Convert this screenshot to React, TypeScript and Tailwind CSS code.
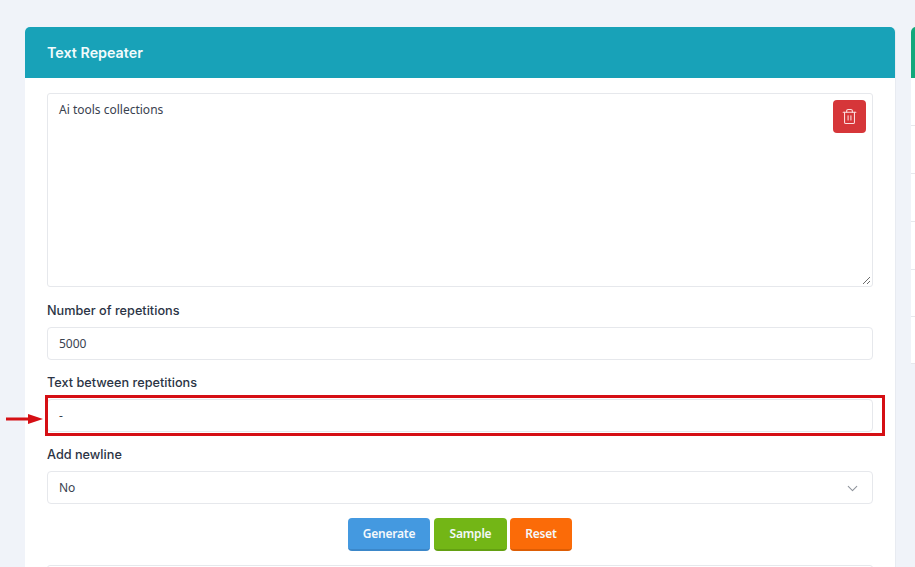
import { ChevronDown, Trash2 } from "lucide-react";

const sideRows = ["h-[48px]", "h-[48px]", "h-[48px]", "h-[48px]", "h-[47px]", "h-[47px]"];

function Label({ children }: { children: string }) {
  return <div className="mb-[9px] h-[15px] pt-[1px] text-[12.7px] leading-[14px] font-[450] text-[#2b3445]">{children}</div>;
}

function Field({ value }: { value: string }) {
  return (
    <div className="flex h-[33px] items-center rounded-[4px] border border-[#e6e8ec] bg-white px-[11px] font-['Noto_Sans',sans-serif] text-[12px] text-[#3a4250]">
      {value}
    </div>
  );
}

export default function App() {
  return (
    <div className="relative h-[567px] w-[915px] overflow-hidden bg-[#f0f3f9] font-['Inter',sans-serif]">
      <div className="flex gap-[15px] pt-[27px] pl-[25px]">
        {/* Main card */}
        <div className="h-[560px] w-[871px] shrink-0 rounded-t-[5px] border-r border-[#e8ebf1] bg-white">
          <div className="flex h-[51px] items-center rounded-t-[5px] bg-[#18a2b8] px-[22px] text-[14.3px] font-semibold text-[#f2fbfc]">
            Text Repeater
          </div>
          <div className="px-[22px] pt-[15px]">
            <div className="relative mb-[16px] h-[194px] rounded-[3px] border border-[#e6e8ec] px-[11px] py-[8px] font-['Noto_Sans',sans-serif] text-[12px] leading-[16px] text-[#3a4250]">
              Ai tools collections
              <div className="absolute top-[6px] right-[6px] flex h-[33px] w-[33px] items-center justify-center rounded-[4px] bg-[#d63639]">
                <Trash2 size={17} strokeWidth={1.5} className="text-[#fbdede]" />
              </div>
              <svg className="absolute right-[1px] bottom-[1px]" width="9" height="9" viewBox="0 0 9 9">
                <path d="M1 8 8 1M5 8 8 5" stroke="#6b6b6b" strokeWidth="1" />
              </svg>
            </div>
            <Label>Number of repetitions</Label>
            <Field value="5000" />
            <div className="h-[15px]" />
            <Label>Text between repetitions</Label>
            <Field value="-" />
            <div className="h-[15px]" />
            <Label>Add newline</Label>
            <div className="flex h-[33px] items-center justify-between rounded-[4px] border border-[#e6e8ec] bg-white pt-[1px] pr-[11px] pl-[11px] font-['Noto_Sans',sans-serif] text-[12px] text-[#3a4250]">
              No
              <ChevronDown size={17} strokeWidth={1.5} className="text-[#8f949c]" />
            </div>
            <div className="mt-[14px] flex justify-center font-['Noto_Sans',sans-serif] text-[12px] font-semibold tracking-[-0.2px] text-[#f4f8fb]">
              <div className="flex h-[33px] w-[82px] items-center justify-center rounded-[4px] border-b-2 border-[#3b87c9] bg-[#4499e0]">Generate</div>
              <div className="ml-[4px] flex h-[33px] w-[73px] items-center justify-center rounded-[4px] border-b-2 border-[#63a012] bg-[#73b616]">Sample</div>
              <div className="ml-[3px] flex h-[33px] w-[62px] items-center justify-center rounded-[4px] border-b-2 border-[#dd5d05] bg-[#fb6b08]">Reset</div>
            </div>
            <div className="mt-[14px] h-[10px] rounded-t-[3px] border border-[#e6e8ec]" />
          </div>
        </div>

        {/* Side card, cut off by the window */}
        <div className="w-[40px] shrink-0">
          <div className="h-[51px] rounded-tl-[5px] bg-[#12a87b]" />
          {sideRows.map((height, i) => (
            <div key={i} className={`${height} border-b border-[#e6e8ec] bg-white`} />
          ))}
        </div>
      </div>

      {/* Annotation over the field */}
      <div className="absolute top-[395px] left-[45px] h-[41px] w-[840px] border-[3px] border-[#d50f14]" />
      <svg className="absolute top-[413px] left-[6px]" width="37" height="12" viewBox="0 0 37 12">
        <path d="M0 6H27" stroke="#d50f14" strokeWidth="3" />
        <path d="M22 1 37 6 22 11Z" fill="#d50f14" />
      </svg>
    </div>
  );
}
